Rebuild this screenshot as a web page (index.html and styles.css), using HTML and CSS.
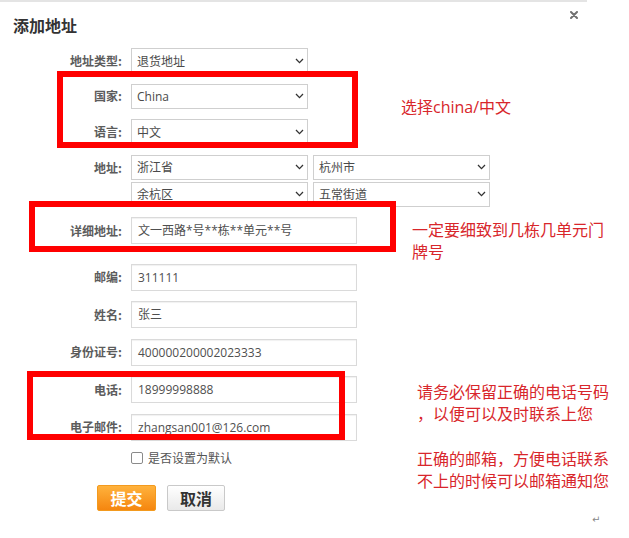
FILE: index.html
```html
<!DOCTYPE html>
<html lang="zh-CN">
<head>
<meta charset="utf-8">
<title>添加地址</title>
<link rel="stylesheet" href="styles.css">
</head>
<body>
<div class="page">
  <div class="topline"></div>
  <div class="header">
    <h1 class="title">添加地址</h1>
    <span class="close"><svg width="8" height="8" viewBox="0 0 8 8"><path d="M1 1L7 7M7 1L1 7" stroke="#707070" stroke-width="2" stroke-linecap="round"/></svg></span>
  </div>

  <div class="form">
    <div class="row">
      <span class="label">地址类型:</span>
      <div class="select"><span>退货地址</span><svg class="chev" width="9" height="6" viewBox="0 0 9 6"><path d="M1 1L4.5 4.6L8 1" fill="none" stroke="#333" stroke-width="1.3"/></svg></div>
    </div>
    <div class="row">
      <span class="label">国家:</span>
      <div class="select"><span>China</span><svg class="chev" width="9" height="6" viewBox="0 0 9 6"><path d="M1 1L4.5 4.6L8 1" fill="none" stroke="#333" stroke-width="1.3"/></svg></div>
    </div>
    <div class="row">
      <span class="label">语言:</span>
      <div class="select"><span>中文</span><svg class="chev" width="9" height="6" viewBox="0 0 9 6"><path d="M1 1L4.5 4.6L8 1" fill="none" stroke="#333" stroke-width="1.3"/></svg></div>
    </div>
    <div class="row row-top">
      <span class="label label-sel">地址:</span>
      <div class="addr-grid">
        <div class="select"><span>浙江省</span><svg class="chev" width="9" height="6" viewBox="0 0 9 6"><path d="M1 1L4.5 4.6L8 1" fill="none" stroke="#333" stroke-width="1.3"/></svg></div>
        <div class="select"><span>杭州市</span><svg class="chev" width="9" height="6" viewBox="0 0 9 6"><path d="M1 1L4.5 4.6L8 1" fill="none" stroke="#333" stroke-width="1.3"/></svg></div>
        <div class="select"><span>余杭区</span><svg class="chev" width="9" height="6" viewBox="0 0 9 6"><path d="M1 1L4.5 4.6L8 1" fill="none" stroke="#333" stroke-width="1.3"/></svg></div>
        <div class="select"><span>五常街道</span><svg class="chev" width="9" height="6" viewBox="0 0 9 6"><path d="M1 1L4.5 4.6L8 1" fill="none" stroke="#333" stroke-width="1.3"/></svg></div>
      </div>
    </div>
    <div class="row row-detail">
      <span class="label">详细地址:</span>
      <div class="input">文一西路*号**栋**单元**号</div>
    </div>
    <div class="row">
      <span class="label">邮编:</span>
      <div class="input">311111</div>
    </div>
    <div class="row">
      <span class="label">姓名:</span>
      <div class="input">张三</div>
    </div>
    <div class="row">
      <span class="label">身份证号:</span>
      <div class="input">400000200002023333</div>
    </div>
    <div class="row">
      <span class="label">电话:</span>
      <div class="input">18999998888</div>
    </div>
    <div class="row">
      <span class="label">电子邮件:</span>
      <div class="input">zhangsan001@126.com</div>
    </div>
    <div class="row row-check">
      <span class="label"></span>
      <div class="check"><span class="box"></span><span>是否设置为默认</span></div>
    </div>
    <div class="actions">
      <button class="btn btn-primary">提交</button>
      <button class="btn btn-default">取消</button>
    </div>
  </div>

  <div class="mark mark-1"></div>
  <div class="mark mark-2"></div>
  <div class="mark mark-3"></div>

  <div class="note note-1">选择china/中文</div>
  <div class="note note-2">一定要细致到几栋几单元门<br>牌号</div>
  <div class="note note-3">请务必保留正确的电话号码<br>，以便可以及时联系上您<br><br>正确的邮箱，方便电话联系<br>不上的时候可以邮箱通知您</div>

  <span class="para-mark">↵</span>
</div>
</body>
</html>
```

FILE: styles.css
```css
html, body {
  margin: 0;
  padding: 0;
  background: #fff;
}

body {
  font-family: "Open Sans", "Noto Sans CJK SC", sans-serif;
  color: #333;
}

.page {
  position: relative;
  width: 629px;
  height: 538px;
  overflow: hidden;
}

.topline {
  width: 587px;
  height: 2px;
  background: #e4e4e4;
}

.header {
  display: flex;
  justify-content: space-between;
  align-items: flex-start;
  width: 587px;
  height: 46px;
  box-sizing: border-box;
  padding: 0 9px 0 13px;
}

.title {
  margin: 12px 0 0;
  font-size: 16px;
  line-height: 22px;
  font-weight: bold;
  color: #333;
  font-family: "Noto Sans CJK SC", sans-serif;
}

.close {
  display: block;
  margin-top: 9px;
  width: 8px;
  height: 8px;
}

.close svg {
  display: block;
}

.form {
  display: flex;
  flex-direction: column;
  gap: 10.5px;
}

.row {
  display: grid;
  grid-template-columns: 122px auto;
  column-gap: 9px;
  align-items: center;
}

.row-top {
  align-items: start;
}

.row-detail {
  margin-bottom: 9px;
}

.label {
  text-align: right;
  font-size: 12px;
  line-height: 16px;
  font-weight: bold;
  color: #5c5c5c;
  font-family: "Noto Sans CJK SC", sans-serif;
}

.label-sel {
  line-height: 25px;
}

.select {
  width: 177px;
  height: 25px;
  box-sizing: border-box;
  border: 1px solid #cfcfcf;
  display: flex;
  align-items: center;
  justify-content: space-between;
  padding: 0 3px 0 5px;
  font-size: 12px;
  color: #4a4a4a;
  background: #fff;
}

.chev {
  display: block;
}

.addr-grid {
  display: grid;
  grid-template-columns: 177px 177px;
  column-gap: 5px;
  row-gap: 2px;
}

.input {
  width: 226px;
  height: 27px;
  box-sizing: border-box;
  border: 1px solid #dadada;
  box-shadow: inset 0 1px 1px rgba(0, 0, 0, 0.06);
  padding: 0 6px;
  font-size: 12px;
  line-height: 25px;
  color: #4f4f4f;
  background: #fff;
}

.row-check {
  height: 14px;
}

.check {
  display: flex;
  align-items: center;
  gap: 5px;
  font-size: 12px;
  line-height: 14px;
  color: #555;
  font-family: "Noto Sans CJK SC", sans-serif;
}

.box {
  display: block;
  width: 12px;
  height: 12px;
  box-sizing: border-box;
  border: 1px solid #8a8a8a;
  border-radius: 2px;
  background: #fff;
}

.actions {
  display: flex;
  gap: 11px;
  padding-left: 97px;
  margin-top: 9.5px;
}

.btn {
  height: 26px;
  padding: 0;
  box-sizing: border-box;
  border-radius: 2px;
  font-family: "Noto Sans CJK SC", sans-serif;
  font-size: 16px;
  line-height: 24px;
  font-weight: bold;
  cursor: pointer;
}

.btn-primary {
  width: 59px;
  color: #fff;
  border: 1px solid #f39a1e;
  background: linear-gradient(#ffb23c, #f5860f);
}

.btn-default {
  width: 58px;
  color: #333;
  border: 1px solid #c9c9c9;
  background: linear-gradient(#ffffff, #e9e9e9);
}

.mark {
  position: absolute;
  box-sizing: border-box;
  border: 6px solid #ff0000;
}

.mark-1 {
  left: 57px;
  top: 71px;
  width: 301px;
  height: 77px;
}

.mark-2 {
  left: 29px;
  top: 201px;
  width: 367px;
  height: 51px;
}

.mark-3 {
  left: 27px;
  top: 371px;
  width: 318px;
  height: 69px;
}

.note {
  position: absolute;
  color: #d8262b;
  font-size: 16px;
  line-height: 22px;
  white-space: nowrap;
}

.note-1 {
  left: 401px;
  top: 96px;
}

.note-2 {
  left: 412px;
  top: 219px;
}

.note-3 {
  left: 417px;
  top: 381px;
  line-height: 22.3px;
}

.para-mark {
  position: absolute;
  left: 592px;
  top: 514px;
  font-size: 10px;
  line-height: 12px;
  color: #888;
  font-family: "DejaVu Sans", sans-serif;
}
```
